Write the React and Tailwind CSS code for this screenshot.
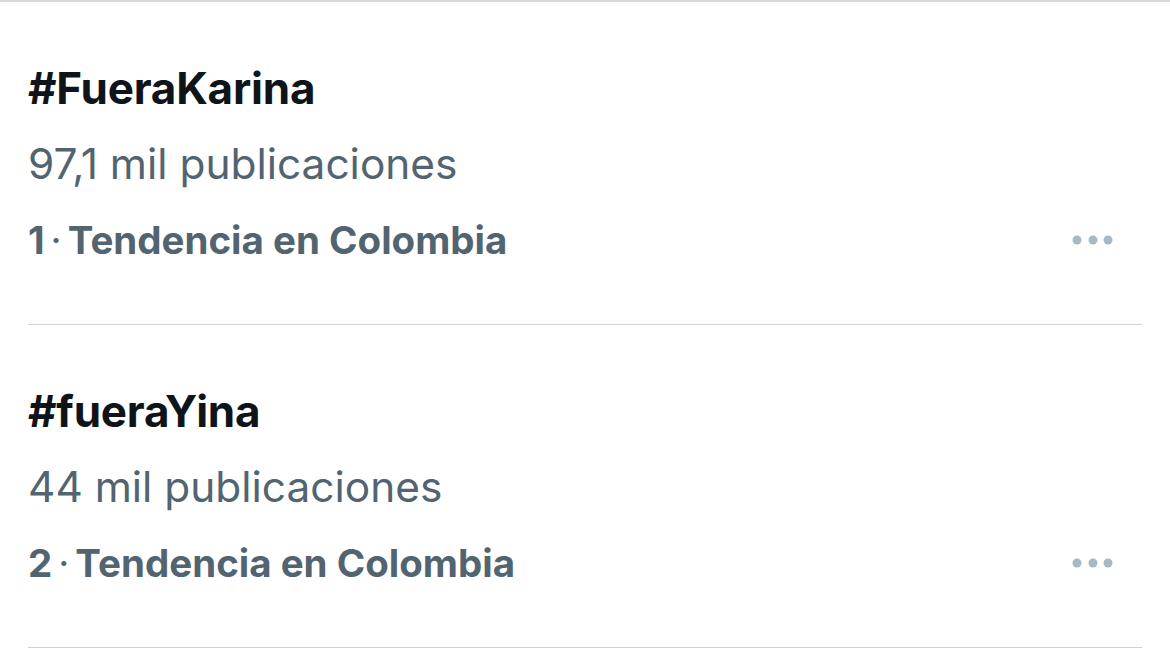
const trends = [
  { rank: 1, tag: '#FueraKarina', posts: '97,1 mil publicaciones' },
  { rank: 2, tag: '#fueraYina', posts: '44 mil publicaciones' },
]

function MoreDots() {
  return (
    <svg width="44" height="10" viewBox="0 0 44 10" className="text-[#aab8c2]">
      <circle cx="6" cy="5" r="4.5" fill="currentColor" />
      <circle cx="22" cy="5" r="4.5" fill="currentColor" />
      <circle cx="37" cy="5" r="4.5" fill="currentColor" />
    </svg>
  )
}

function TrendRow({ rank, tag, posts }) {
  return (
    <div className="border-b border-[#cfd3d6] pt-[48px] pb-[46px]">
      <p className="text-[44px] font-bold leading-[76px] tracking-[-0.2px] text-[#0f1419]">{tag}</p>
      <p className="text-[42.4px] leading-[76px] text-[#536471]">{posts}</p>
      <div className="flex items-center justify-between">
        <p className="text-[38.5px] font-bold leading-[76px] text-[#536471]">
          {rank}
          <span className="mx-[6px] font-normal">·</span>
          Tendencia en Colombia
        </p>
        <div className="pr-[27px]">
          <MoreDots />
        </div>
      </div>
    </div>
  )
}

export default function App() {
  return (
    <div className="min-h-[660px] w-[1170px] border-t-2 border-[#d6d9dc] bg-white font-['Inter','Noto_Sans',sans-serif]">
      <div className="px-[28px]">
        {trends.map((t) => (
          <TrendRow key={t.rank} {...t} />
        ))}
      </div>
    </div>
  )
}
